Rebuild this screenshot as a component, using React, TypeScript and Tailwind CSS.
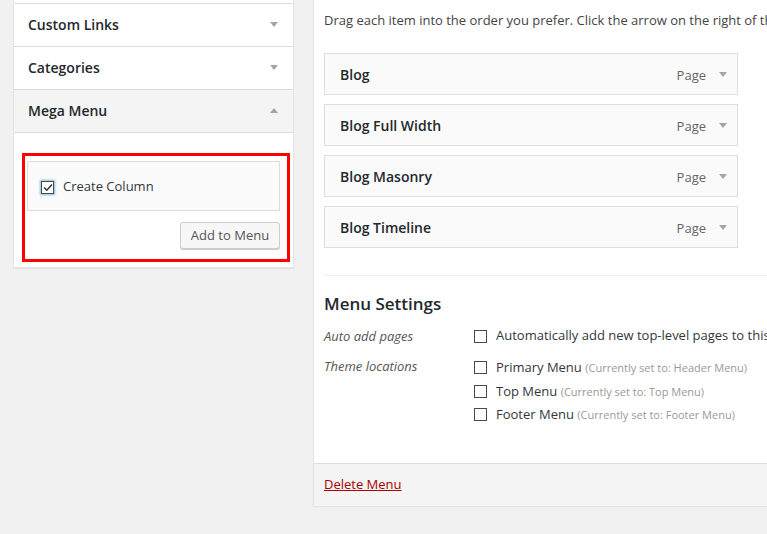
import React from "react";

const font = { fontFamily: '"Open Sans", "Noto Sans", sans-serif' };

function Arrow({ up = false }: { up?: boolean }) {
  return (
    <svg width="8" height="5" viewBox="0 0 8 5" className="shrink-0">
      <path d={up ? "M0 5 L4 0 L8 5 Z" : "M0 0 L8 0 L4 5 Z"} fill="#a0a5aa" />
    </svg>
  );
}

function Box({ checked = false, focus = false }: { checked?: boolean; focus?: boolean }) {
  return (
    <span
      className={
        "w-[13px] h-[13px] border border-[#4a4a4a] bg-white flex items-center justify-center shrink-0 " +
        (focus ? "shadow-[0_0_2px_1px_rgba(30,140,190,0.55)]" : "")
      }
    >
      {checked && (
        <svg width="10" height="9" viewBox="0 0 10 9">
          <path d="M1 4.5 L3.8 7.2 L9 1.5" fill="none" stroke="#333" strokeWidth="1.5" />
        </svg>
      )}
    </span>
  );
}

function SideRow({ label, open = false }: { label: string; open?: boolean }) {
  return (
    <div
      className={
        "h-[43px] border-t border-[#dddddd] pl-[14px] pr-[15px] pb-[2px] flex items-center justify-between " +
        (open ? "bg-[#f4f4f4]" : "bg-white")
      }
    >
      <span className="text-[14px] font-semibold text-[#23282d]">{label}</span>
      <Arrow up={open} />
    </div>
  );
}

function MenuItem({ title }: { title: string }) {
  return (
    <div className="h-[42px] w-[414px] border border-[#dfdfdf] bg-[#fafafa] pl-[15px] pr-[10px] flex items-center">
      <span className="text-[14px] font-semibold text-[#23282d] flex-1">{title}</span>
      <span className="text-[13px] text-[#666] pt-[3px]">Page</span>
      <span className="ml-[13px] flex items-center">
        <Arrow />
      </span>
    </div>
  );
}

function Location({ name, current }: { name: string; current: string }) {
  return (
    <div className="h-[23.5px] flex items-center gap-[9px] whitespace-nowrap">
      <Box />
      <span className="text-[13px] text-[#32373c]">
        {name} <span className="text-[11px] text-[#999]">(Currently set to: {current})</span>
      </span>
    </div>
  );
}

export default function App() {
  return (
    <div style={font} className="w-[767px] h-[534px] overflow-hidden bg-[#f1f1f1] flex">
      {/* left accordion */}
      <div className="ml-[13px] w-[281px] shrink-0 self-start">
        <div className="bg-white border-x border-b border-[#e5e5e5] shadow-[0_1px_1px_rgba(0,0,0,0.05)]">
          <div className="h-[3px]" />
          <SideRow label="Custom Links" />
          <SideRow label="Categories" />
          <SideRow label="Mega Menu" open />
          <div className="border-t border-[#dddddd] pt-[20px] pb-[5px] pl-[8px]">
            <div className="w-[268px] border-[3px] border-[#ff0000] pt-[5px] pb-[10px] pl-[2px] pr-[7px]">
              <div className="h-[50px] border border-[#dddddd] bg-[#fbfbfb] pl-[13px] pt-[2px] flex items-center gap-[9px]">
                <Box checked focus />
                <span className="text-[13px] text-[#32373c]">Create Column</span>
              </div>
              <div className="flex justify-end mt-[11px]">
                <button className="h-[27px] w-[100px] rounded-[3px] border border-[#cccccc] bg-[#f7f7f7] shadow-[0_1px_0_#cccccc] pt-[1px] text-[13px] text-[#555]">
                  Add to Menu
                </button>
              </div>
            </div>
          </div>
        </div>
      </div>

      {/* right menu structure */}
      <div className="ml-[19px] flex-1 min-w-[460px] self-start">
        <div className="border-l border-[#e5e5e5] shadow-[0_1px_1px_rgba(0,0,0,0.05)]">
          <div className="h-[463px] bg-white pl-[10px] pt-[10px]">
            <p className="text-[13px] leading-[20px] text-[#444] whitespace-nowrap">
              Drag each item into the order you prefer. Click the arrow on the right of the item to reveal additional configuration options.
            </p>
            <div className="mt-[23px] flex flex-col gap-[9px]">
              <MenuItem title="Blog" />
              <MenuItem title="Blog Full Width" />
              <MenuItem title="Blog Masonry" />
              <MenuItem title="Blog Timeline" />
            </div>
            <div className="mt-[27px] border-t border-[#eeeeee]" />
            <h3 className="mt-[16px] text-[17px] leading-[24px] font-semibold text-[#23282d]">Menu Settings</h3>
            <div className="mt-[10px] flex">
              <div className="w-[150px] shrink-0 text-[13px] leading-[20px] italic text-[#555]">Auto add pages</div>
              <div className="h-[20px] flex items-center gap-[9px] whitespace-nowrap">
                <Box />
                <span className="text-[13px] text-[#32373c]">Automatically add new top-level pages to this menu</span>
              </div>
            </div>
            <div className="mt-[10px] flex">
              <div className="w-[150px] shrink-0 text-[13px] leading-[20px] italic text-[#555]">Theme locations</div>
              <div className="flex flex-col">
                <Location name="Primary Menu" current="Header Menu" />
                <Location name="Top Menu" current="Top Menu" />
                <Location name="Footer Menu" current="Footer Menu" />
              </div>
            </div>
          </div>
          <div className="h-[43px] border-t border-[#dddddd] bg-[#f4f4f4] pl-[10px] flex items-center">
            <a href="#" className="text-[13px] text-[#aa0000] underline">
              Delete Menu
            </a>
          </div>
        </div>
      </div>
    </div>
  );
}
